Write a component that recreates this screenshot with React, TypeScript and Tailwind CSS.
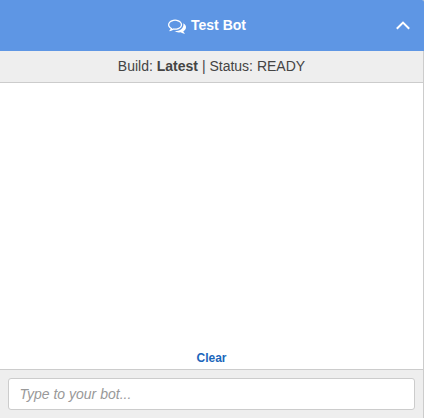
export default function App() {
  return (
    <div className="flex h-[418px] w-[424px] flex-col border-r border-[#cccccc] bg-white font-['Liberation_Sans',Arial,sans-serif] text-[#444444]">
      <header className="-mr-px flex h-[51px] shrink-0 items-center rounded-tr-[2px] bg-[#5e96e4] text-white">
        <div className="flex flex-1 items-center justify-center gap-[5px] pl-[18px]">
          <svg viewBox="0 0 1792 1792" className="h-[18px] w-[18px] fill-current">
            <path d="M704 384q-153 0-286 52t-211.500 141-78.500 191q0 82 53 158t149 132l97 56-35 84q34-20 62-39l44-31 53 10q78 14 153 14 153 0 286-52t211.500-141 78.500-191-78.500-191-211.500-141-286-52zm0-128q191 0 353.500 68.500t256.500 186.500 94 257-94 257-256.500 186.500-353.500 68.500q-86 0-176-16-124 88-278 128-36 9-86 16h-3q-11 0-20.500-8t-11.500-21q-1-3-1-6.500t.5-6.500 2-6l2.500-5 3.500-5.500 4-5 4.500-5 4-4.500q5-6 23-25t26-29.500 22.500-29 25-38.500 20.500-44q-124-72-195-177t-71-224q0-139 94-257t256.500-186.500 353.500-68.500zm822 1169q10 24 20.500 44t25 38.500 22.500 29 26 29.500 23 25q1 1 4 4.500t4.500 5 4 5 3.500 5.500l2.500 5 2 6 .5 6.500-1 6.500q-3 14-13 22t-22 7q-50-7-86-16-154-40-278-128-90 16-176 16-271 0-472-132 58 4 88 4 161 0 309-45t264-129q125-92 192-212t67-254q0-77-23-152 129 71 204 178t75 230q0 120-71 224.500t-195 176.500z" />
          </svg>
          <h1 className="text-[14px] font-bold">Test Bot</h1>
        </div>
        <svg viewBox="0 0 14 9" className="mr-[14px] h-[9px] w-[14px]" fill="none" stroke="currentColor" strokeWidth="2">
          <path d="M.8 7.800 7 1.600l6.200 6.200" />
        </svg>
      </header>
      <div className="flex h-[32px] shrink-0 items-center justify-center border-b border-[#cccccc] bg-[#eeeeee] text-[14px]">
        <p>Build: <b>Latest</b> | Status: READY</p>
      </div>
      <main className="flex flex-1 items-end justify-center pb-[2px]">
        <button className="text-[12px] font-bold text-[#1b66bb]">Clear</button>
      </main>
      <footer className="h-[49px] shrink-0 border-t border-[#cccccc] bg-[#eeeeee] p-2">
        <input className="h-[32px] w-full rounded-[3px] border border-[#cccccc] bg-white pr-[11px] pl-[10.5px] text-[14px] italic placeholder:text-[#999999]" placeholder="Type to your bot..." />
      </footer>
    </div>
  );
}
